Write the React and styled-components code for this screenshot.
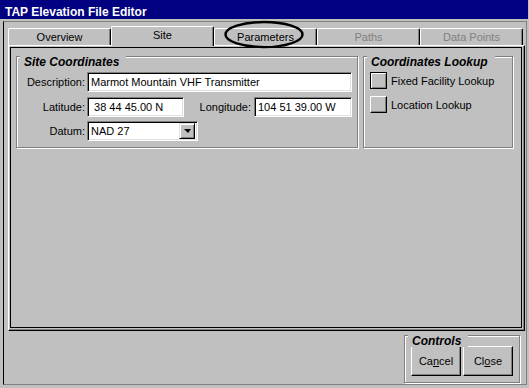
import React from 'react'
import styled, { createGlobalStyle } from 'styled-components'

const GlobalStyle = createGlobalStyle`
  html, body {
    margin: 0;
    padding: 0;
    background: #c0c0c0;
  }
  body {
    font-family: "Liberation Sans", Arial, sans-serif;
    font-size: 11px;
    color: #000;
  }
`

const Window = styled.div`
  position: relative;
  width: 529px;
  height: 388px;
  box-sizing: border-box;
  background: #c0c0c0;
  display: flex;
  flex-direction: column;
  overflow: hidden;
`

const TitleBar = styled.div`
  height: 19px;
  box-sizing: border-box;
  margin-right: 1px;
  padding: 4px 0 0 5px;
  background: #000080;
  color: #fff;
  font-weight: bold;
  font-size: 12px;
  line-height: 16px;
  white-space: nowrap;
`

const Client = styled.div`
  flex: 1;
  margin: 2px 2px 3px 3px;
  padding: 4px 1px 0 4px;
  border: 1px solid #808080;
  border-left-color: #000;
  display: flex;
  flex-direction: column;
  min-height: 0;
`

const TabStrip = styled.div`
  position: relative;
  z-index: 1;
  height: 19px;
  display: flex;
  align-items: flex-end;
`

const Tab = styled.div`
  width: 103px;
  height: ${p => (p.$active ? '20px' : '17px')};
  margin-bottom: ${p => (p.$active ? '-1px' : '0')};
  padding-bottom: ${p => (p.$active ? '3px' : '0')};
  box-sizing: border-box;
  background: #c0c0c0;
  border-top: 1px solid #fff;
  border-left: 1px solid #fff;
  border-right: 1px solid #000;
  border-radius: 2px 2px 0 0;
  box-shadow: inset -1px 0 0 #808080;
  display: flex;
  align-items: center;
  justify-content: center;
  color: ${p => (p.$disabled ? '#808080' : '#000')};
`

const TabPage = styled.div`
  height: 286px;
  box-sizing: border-box;
  flex: none;
  padding: 1px 2px 2px 1px;
  border-top: 1px solid #fff;
  border-left: 1px solid #fff;
  border-right: 1px solid #000;
  border-bottom: 1px solid #000;
  box-shadow: inset -1px -1px 0 #808080;
  display: flex;
`

const Panel = styled.div`
  flex: 1;
  border: 1px solid #000;
  padding: 8px 5px 0;
  display: flex;
  align-items: flex-start;
  gap: 5px;
`

const Group = styled.div`
  position: relative;
  width: ${p => p.$w}px;
  height: ${p => p.$h}px;
  box-sizing: border-box;
  padding: ${p => p.$pad};
  border: 1px solid #808080;
  box-shadow: inset 1px 1px 0 #fff, 1px 1px 0 #fff;
  display: flex;
  flex-direction: column;
  gap: ${p => p.$gap}px;
`

const GroupLabel = styled.span`
  position: absolute;
  top: -1px;
  left: 3px;
  padding: 0 7px 0 4px;
  background: #c0c0c0;
  font-weight: bold;
  font-style: italic;
  font-size: 12px;
  line-height: 12px;
  white-space: nowrap;
`

const Row = styled.div`
  display: flex;
  align-items: center;
  height: 20px;
`

const Label = styled.span`
  width: 67px;
  margin-right: ${p => p.$gap || 2}px;
  text-align: right;
  white-space: nowrap;
`

const Field = styled.div`
  width: ${p => p.$w}px;
  height: 20px;
  box-sizing: border-box;
  padding: 0 2px 0 3px;
  background: #fff;
  border-top: 1px solid #808080;
  border-left: 1px solid #808080;
  border-bottom: 1px solid #fff;
  border-right: 1px solid #fff;
  box-shadow: inset 1px 1px 0 #000, inset -1px -1px 0 #dfdfdf;
  display: flex;
  align-items: center;
  justify-content: space-between;
  white-space: pre;
`

const DropButton = styled.div`
  width: 16px;
  height: 16px;
  box-sizing: border-box;
  background: #c0c0c0;
  border-top: 1px solid #dfdfdf;
  border-left: 1px solid #dfdfdf;
  border-bottom: 1px solid #000;
  border-right: 1px solid #000;
  box-shadow: inset 1px 1px 0 #fff, inset -1px -1px 0 #808080;
  display: flex;
  align-items: center;
  justify-content: center;
`

const Arrow = styled.span`
  width: 0;
  height: 0;
  border-left: 4px solid transparent;
  border-right: 3px solid transparent;
  border-top: 4px solid #000;
`

const LookupRow = styled.div`
  display: flex;
  align-items: center;
  gap: 4px;
  height: 17px;
`

const SquareButton = styled.div`
  width: 17px;
  height: 17px;
  box-sizing: border-box;
  background: #c0c0c0;
  border: 1px solid #000;
  border-top-color: ${p => (p.$default ? '#000' : '#fff')};
  border-left-color: ${p => (p.$default ? '#000' : '#fff')};
  box-shadow: ${p =>
    p.$default
      ? 'inset 1px 1px 0 #fff, inset -1px -1px 0 #808080'
      : 'inset -1px -1px 0 #808080'};
`

const Footer = styled.div`
  flex: 1;
  display: flex;
  justify-content: flex-end;
  align-items: flex-start;
  padding: 4px 5px 0 0;
`

const PushButton = styled.div`
  width: 50px;
  height: 30px;
  box-sizing: border-box;
  background: #c0c0c0;
  border-top: 1px solid #fff;
  border-left: 1px solid #fff;
  border-bottom: 1px solid #000;
  border-right: 1px solid #000;
  box-shadow: inset -1px -1px 0 #808080;
  display: flex;
  align-items: center;
  justify-content: center;
`

const ButtonRow = styled.div`
  display: flex;
  gap: 2px;
`

const Circle = styled.svg`
  position: absolute;
  z-index: 2;
  left: 223px;
  top: 20px;
  overflow: visible;
`

const tabs = [
  { name: 'Overview' },
  { name: 'Site', active: true },
  { name: 'Parameters' },
  { name: 'Paths', disabled: true },
  { name: 'Data Points', disabled: true },
]

export default function App() {
  return (
    <>
      <GlobalStyle />
      <Window>
        <TitleBar>TAP Elevation File Editor</TitleBar>
        <Client>
          <TabStrip>
            {tabs.map(t => (
              <Tab key={t.name} $active={t.active} $disabled={t.disabled}>
                {t.name}
              </Tab>
            ))}
          </TabStrip>
          <TabPage>
            <Panel>
              <Group $w={342} $h={92} $pad="15px 0 0 1px" $gap={4.5}>
                <GroupLabel>Site Coordinates</GroupLabel>
                <Row>
                  <Label>Description:</Label>
                  <Field $w={265}>Marmot Mountain VHF Transmitter</Field>
                </Row>
                <Row>
                  <Label>Latitude:</Label>
                  <Field $w={97}> 38 44 45.00 N</Field>
                  <Label $gap={3}>Longitude:</Label>
                  <Field $w={98}>104 51 39.00 W</Field>
                </Row>
                <Row>
                  <Label>Datum:</Label>
                  <Field $w={111}>
                    NAD 27
                    <DropButton>
                      <Arrow />
                    </DropButton>
                  </Field>
                </Row>
              </Group>
              <Group $w={150} $h={92} $pad="15px 0 0 6px" $gap={7}>
                <GroupLabel>Coordinates Lookup</GroupLabel>
                <LookupRow>
                  <SquareButton $default />
                  Fixed Facility Lookup
                </LookupRow>
                <LookupRow>
                  <SquareButton />
                  Location Lookup
                </LookupRow>
              </Group>
            </Panel>
          </TabPage>
          <Footer>
            <Group $w={116} $h={48} $pad="10px 0 0 6px" $gap={0}>
              <GroupLabel>Controls</GroupLabel>
              <ButtonRow>
                <PushButton>Ca<u>n</u>cel</PushButton>
                <PushButton>Cl<u>o</u>se</PushButton>
              </ButtonRow>
            </Group>
          </Footer>
        </Client>
        <Circle width="84" height="30">
          <ellipse cx="41" cy="14.5" rx="38.5" ry="12.5" fill="none" stroke="#000" strokeWidth="2.5" />
        </Circle>
      </Window>
    </>
  )
}
